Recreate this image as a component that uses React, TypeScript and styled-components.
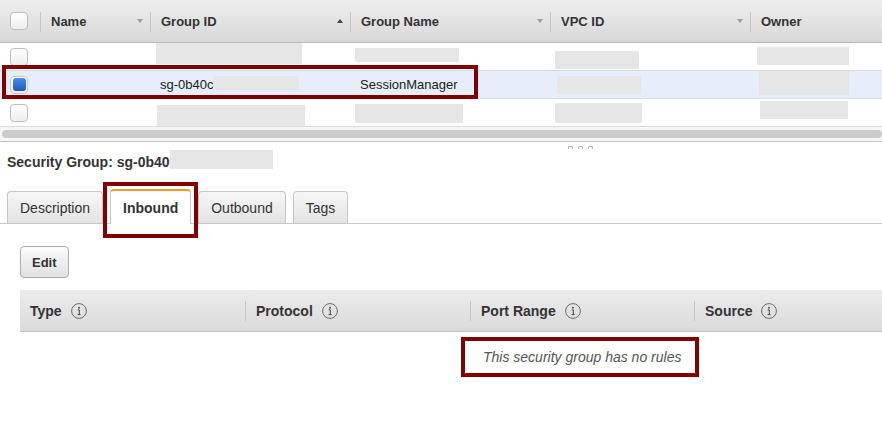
import React from "react";
import styled, { createGlobalStyle, css } from "styled-components";

const GlobalStyle = createGlobalStyle`
  html, body { margin: 0; padding: 0; background: #fff; }
  body { font-family: "Liberation Sans", Arial, Helvetica, sans-serif; color: #333; }
  * { box-sizing: border-box; }
`;

const COLS = "40px 110px 200px 200px 200px 1fr";
const RED = "#800000";

const Page = styled.div`
  width: 882px;
  height: 431px;
  overflow: hidden;
  display: flex;
  flex-direction: column;
`;

/* ---------- top grid ---------- */
const GridHeader = styled.div`
  display: grid;
  grid-template-columns: ${COLS};
  height: 43px;
  background: linear-gradient(#eeeeee, #d8d8d8);
  border-bottom: 1px solid #b9b9b9;
`;

const sepLine = css`
  &::before {
    content: "";
    position: absolute;
    left: 0;
    top: 12px;
    width: 1px;
    height: 20px;
    background: #c4c4c4;
  }
`;

const HeadCell = styled.div<{ $sep?: boolean }>`
  position: relative;
  display: flex;
  align-items: center;
  justify-content: space-between;
  padding: 0 7px 0 11px;
  font-size: 13px;
  font-weight: bold;
  color: #333;
  ${(p) => p.$sep && sepLine}
`;

const CheckCell = styled.div`
  display: flex;
  align-items: center;
  padding-left: 10px;
`;

const Checkbox = styled.span<{ $checked?: boolean }>`
  width: 18px;
  height: 18px;
  border: 1px solid ${(p) => (p.$checked ? "#c8c8c8" : "#bcbcbc")};
  border-radius: 4px;
  background: linear-gradient(#ffffff, #ededed);
  display: flex;
  align-items: center;
  justify-content: center;
  ${(p) =>
    p.$checked &&
    css`
      &::after {
        content: "";
        width: 13px;
        height: 13px;
        border-radius: 3px;
        background: linear-gradient(#4a8de6, #1c5bc0);
      }
    `}
`;

const SortArrow = styled.span<{ $up?: boolean }>`
  width: 0;
  height: 0;
  border-left: 3.5px solid transparent;
  border-right: 3.5px solid transparent;
  ${(p) =>
    p.$up
      ? css`border-bottom: 4px solid #444;`
      : css`border-top: 4px solid #9d9d9d;`}
`;

const Body = styled.div`
  position: relative;
`;

const Row = styled.div<{ $selected?: boolean }>`
  display: grid;
  grid-template-columns: ${COLS};
  height: 28px;
  border-bottom: 1px solid #dadada;
  background: ${(p) => (p.$selected ? "#e5eefa" : "#fff")};
`;

const BodyCell = styled.div`
  display: flex;
  align-items: center;
  font-size: 13px;
  color: #222;
  overflow: hidden;
`;

const CellText = styled.span`
  padding-left: 10px;
  white-space: nowrap;
`;

const Redact = styled.span<{ $w: number; $h: number; $dx?: number; $dy?: number }>`
  display: block;
  flex-shrink: 0;
  align-self: flex-start;
  width: ${(p) => p.$w}px;
  height: ${(p) => p.$h}px;
  margin-left: ${(p) => p.$dx ?? 0}px;
  margin-top: ${(p) => p.$dy ?? 0}px;
  background: #e6e6e6;
`;

const RowCallout = styled.div`
  position: absolute;
  left: 2px;
  top: 22px;
  width: 476px;
  height: 34px;
  border: 4px solid ${RED};
  pointer-events: none;
`;

const ScrollTrack = styled.div`
  height: 15px;
  padding: 3px 0 0 2px;
  background: #f6f6f6;
  border-bottom: 1px solid #c6c6c6;
`;

const Thumb = styled.div`
  height: 8px;
  border-radius: 4px;
  background: #cbcbcb;
`;

const Splitter = styled.div`
  height: 8px;
  display: flex;
  gap: 5px;
  padding: 4px 0 0 568px;
`;

const Grip = styled.span`
  width: 5px;
  height: 3px;
  border: 1px solid #a9a9a9;
  border-bottom: none;
  border-radius: 2px 2px 0 0;
`;

/* ---------- detail pane ---------- */
const Title = styled.div`
  display: flex;
  align-items: flex-start;
  height: 22px;
  padding-left: 7px;
`;

const TitleText = styled.span`
  font-size: 14px;
  font-weight: bold;
  line-height: 20px;
  padding-top: 2px;
  color: #333;
  white-space: nowrap;
`;

const TabBar = styled.div`
  margin-top: 17px;
  display: flex;
  align-items: flex-end;
  gap: 7px;
  padding-left: 7px;
  border-bottom: 1px solid #c8c8c8;
`;

const Tab = styled.div<{ $active?: boolean }>`
  position: relative;
  height: 32px;
  display: flex;
  align-items: center;
  padding: 0 12px;
  border: 1px solid #c6c6c6;
  border-bottom: none;
  border-radius: 4px 4px 0 0;
  background: linear-gradient(#f6f6f6, #e4e4e4);
  font-size: 14px;
  color: #333;
  ${(p) =>
    p.$active &&
    css`
      height: 35px;
      margin-bottom: -1px;
      border-top: 2px solid #ef9a2b;
      background: #fff;
      font-weight: bold;
    `}
`;

const TabCallout = styled.div`
  position: absolute;
  left: -8px;
  top: -9px;
  width: 95px;
  height: 56px;
  border: 4px solid ${RED};
  pointer-events: none;
`;

const TabContent = styled.div`
  padding: 22px 0 0 20px;
`;

const EditButton = styled.button`
  height: 32px;
  padding: 0 11px;
  border: 1px solid #adadad;
  border-radius: 4px;
  background: linear-gradient(#fbfbfb, #e1e1e1);
  font-family: inherit;
  font-size: 13px;
  font-weight: bold;
  color: #333;
`;

const RulesHeader = styled.div`
  margin-top: 12px;
  display: grid;
  grid-template-columns: 225px 225px 224px 1fr;
  height: 42px;
  background: linear-gradient(#ececec, #dadada);
  border-bottom: 1px solid #c6c6c6;
`;

const RuleHeadCell = styled.div<{ $sep?: boolean }>`
  position: relative;
  display: flex;
  align-items: center;
  gap: 9px;
  padding-left: ${(p) => (p.$sep ? 11 : 10)}px;
  font-size: 14px;
  font-weight: bold;
  color: #333;
  ${(p) =>
    p.$sep &&
    css`
      &::before {
        content: "";
        position: absolute;
        left: 0;
        top: 11px;
        width: 1px;
        height: 20px;
        background: #c4c4c4;
      }
    `}
`;

const MessageRow = styled.div`
  padding: 5px 0 0 441px;
`;

const MessageCallout = styled.div`
  display: flex;
  align-items: center;
  width: fit-content;
  height: 40px;
  padding: 0 14px 0 18px;
  border: 4px solid ${RED};
  font-size: 14px;
  font-style: italic;
  color: #555;
  white-space: nowrap;
`;

const InfoIcon = () => (
  <svg width="16" height="16" viewBox="0 0 16 16" fill="none">
    <circle cx="8" cy="8" r="7.4" stroke="#6a6a6a" strokeWidth="1" />
    <circle cx="8" cy="4.7" r="0.95" fill="#444" />
    <path d="M6.7 6.9H8.3V11.6 M6.6 11.6H9.6" stroke="#444" strokeWidth="1" />
  </svg>
);

type R = { w: number; h: number; dx: number; dy: number };
const rows: {
  selected?: boolean;
  gid?: string;
  gname?: string;
  gidR: R;
  gnameR?: R;
  vpcR: R;
  ownerR: R;
}[] = [
  {
    gidR: { w: 146, h: 21, dx: 6, dy: 0 },
    gnameR: { w: 104, h: 14, dx: 5, dy: 5 },
    vpcR: { w: 84, h: 18, dx: 5, dy: 8 },
    ownerR: { w: 92, h: 18, dx: 7, dy: 4 },
  },
  {
    selected: true,
    gid: "sg-0b40c",
    gname: "SessionManager",
    gidR: { w: 86, h: 14, dx: 0, dy: 5 },
    vpcR: { w: 84, h: 18, dx: 7, dy: 5 },
    ownerR: { w: 90, h: 24, dx: 9, dy: 0 },
  },
  {
    gidR: { w: 148, h: 21, dx: 7, dy: 6 },
    gnameR: { w: 108, h: 19, dx: 5, dy: 5 },
    vpcR: { w: 87, h: 20, dx: 5, dy: 4 },
    ownerR: { w: 88, h: 18, dx: 10, dy: 2 },
  },
];

const Rd = ({ r }: { r: R }) => <Redact $w={r.w} $h={r.h} $dx={r.dx} $dy={r.dy} />;

export default function App() {
  return (
    <Page>
      <GlobalStyle />
      <GridHeader>
        <CheckCell>
          <Checkbox />
        </CheckCell>
        <HeadCell $sep>
          Name <SortArrow />
        </HeadCell>
        <HeadCell $sep>
          Group ID <SortArrow $up />
        </HeadCell>
        <HeadCell $sep>
          Group Name <SortArrow />
        </HeadCell>
        <HeadCell $sep>
          VPC ID <SortArrow />
        </HeadCell>
        <HeadCell $sep>Owner</HeadCell>
      </GridHeader>
      <Body>
        {rows.map((r, i) => (
          <Row key={i} $selected={r.selected}>
            <CheckCell>
              <Checkbox $checked={r.selected} />
            </CheckCell>
            <BodyCell />
            <BodyCell>
              {r.gid && <CellText>{r.gid}</CellText>}
              <Rd r={r.gidR} />
            </BodyCell>
            <BodyCell>
              {r.gname && <CellText>{r.gname}</CellText>}
              {r.gnameR && <Rd r={r.gnameR} />}
            </BodyCell>
            <BodyCell>
              <Rd r={r.vpcR} />
            </BodyCell>
            <BodyCell>
              <Rd r={r.ownerR} />
            </BodyCell>
          </Row>
        ))}
        <RowCallout />
      </Body>
      <ScrollTrack>
        <Thumb />
      </ScrollTrack>
      <Splitter>
        <Grip />
        <Grip />
        <Grip />
      </Splitter>
      <Title>
        <TitleText>Security Group: sg-0b40</TitleText>
        <Redact $w={103} $h={19} />
      </Title>
      <TabBar>
        <Tab>Description</Tab>
        <Tab $active>
          Inbound
          <TabCallout />
        </Tab>
        <Tab>Outbound</Tab>
        <Tab>Tags</Tab>
      </TabBar>
      <TabContent>
        <EditButton>Edit</EditButton>
        <RulesHeader>
          <RuleHeadCell>
            Type <InfoIcon />
          </RuleHeadCell>
          <RuleHeadCell $sep>
            Protocol <InfoIcon />
          </RuleHeadCell>
          <RuleHeadCell $sep>
            Port Range <InfoIcon />
          </RuleHeadCell>
          <RuleHeadCell $sep>
            Source <InfoIcon />
          </RuleHeadCell>
        </RulesHeader>
        <MessageRow>
          <MessageCallout>This security group has no rules</MessageCallout>
        </MessageRow>
      </TabContent>
    </Page>
  );
}
